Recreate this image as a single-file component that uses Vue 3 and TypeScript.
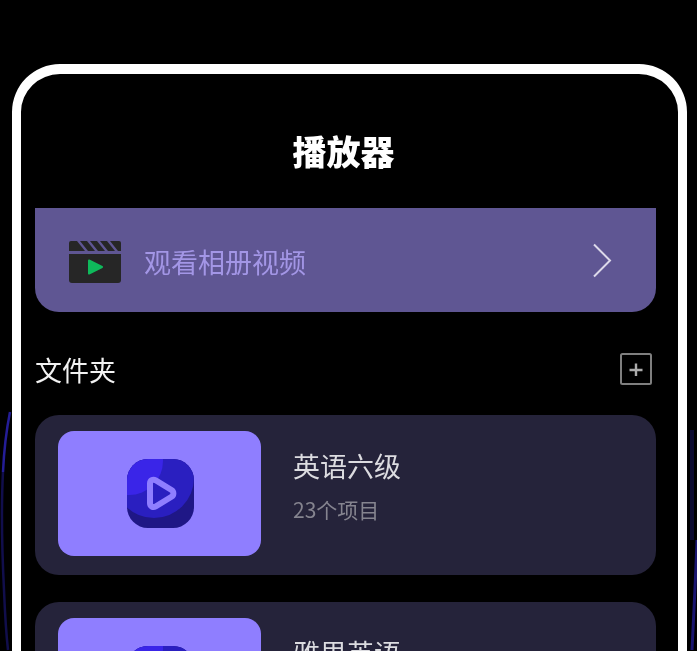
<script setup lang="ts">
interface Folder {
  name: string
  count: string
}

const folders: Folder[] = [
  { name: '英语六级', count: '23个项目' },
  { name: '雅思英语', count: '18个项目' },
]
</script>

<template>
  <div class="page">
    <svg class="bg-lines" width="697" height="651" viewBox="0 0 697 651" fill="none">
      <path d="M10 412C6 432 4 450 3 472" stroke="#241d96" stroke-width="2.5" />
      <path d="M3 472C1 510 2 550 4 590C5 615 6 632 8 650" stroke="#110e4c" stroke-width="2.5" />
      <path d="M692 650C694 610 696 570 697 540" stroke="#1a1670" stroke-width="3" />
      <path d="M692 430V540" stroke="#0c0a30" stroke-width="4" />
    </svg>
    <div class="phone">
      <h1 class="title">播放器</h1>

      <div class="banner">
        <svg class="clapper" width="52" height="42" viewBox="0 0 52 42">
          <path d="M2 0H50A2 2 0 0 1 52 2V10H0V2A2 2 0 0 1 2 0Z" fill="#262626" />
          <path d="M8 0L16 10H19L11 0ZM18 0L26 10H29L21 0ZM28 0L36 10H39L31 0ZM38 0L46 10H49L41 0Z" fill="#5f5693" />
          <path d="M0 13H52V39A3 3 0 0 1 49 42H3A3 3 0 0 1 0 39Z" fill="#262626" />
          <path d="M20 19.5L33 26L20 32.5Z" fill="#0fb95b" stroke="#0fb95b" stroke-width="2" stroke-linejoin="round" />
        </svg>
        <span class="banner-text">观看相册视频</span>
        <svg class="chevron" width="20" height="35" viewBox="0 0 20 35" fill="none">
          <path d="M2 1.5L18 17.5L2 33.5" stroke="#dcd9ea" stroke-width="2" />
        </svg>
      </div>

      <div class="section-head">
        <span class="section-title">文件夹</span>
        <svg width="32" height="32" viewBox="0 0 32 32" fill="none">
          <rect x="1" y="1" width="30" height="30" rx="1.5" stroke="#7f7f7f" stroke-width="2" />
          <path d="M16 10.5V23M9.5 17H22.5" stroke="#ababab" stroke-width="2.4" />
        </svg>
      </div>

      <div class="folder-list">
        <div v-for="folder in folders" :key="folder.name" class="folder">
          <div class="thumb">
            <svg width="67" height="69" viewBox="0 0 67 69">
              <defs>
                <clipPath id="app-icon-clip">
                  <rect width="67" height="69" rx="21" />
                </clipPath>
              </defs>
              <g clip-path="url(#app-icon-clip)">
                <rect width="67" height="69" fill="#1f1786" />
                <circle cx="27" cy="19" r="40" fill="#2a1fc0" />
                <circle cx="2" cy="2" r="34" fill="#3a25e8" />
              </g>
              <path d="M23 24.5C23 21.5 26 19.8 28.6 21.3L44.5 31C47 32.5 47 36.3 44.5 37.8L28.6 47.5C26 49 23 47.3 23 44.3Z" fill="#2a1fc0" stroke="#8f7eff" stroke-width="6" stroke-linejoin="round" />
            </svg>
          </div>
          <div class="folder-info">
            <div class="folder-name">{{ folder.name }}</div>
            <div class="folder-count">{{ folder.count }}</div>
          </div>
        </div>
      </div>
    </div>
  </div>
</template>

<style>
html,
body {
  margin: 0;
  background: #000;
}
</style>

<style scoped>
.page {
  position: relative;
  height: 651px;
  overflow: hidden;
  background: #000;
  font-family: "Noto Sans CJK SC", "Noto Sans", sans-serif;
  filter: blur(0.5px);
}
.bg-lines {
  position: absolute;
  left: 0;
  top: 0;
}
.phone {
  position: relative;
  box-sizing: border-box;
  width: 675px;
  height: 760px;
  margin: 64px 0 0 12px;
  padding: 0 22px 0 14px;
  border: 9px solid #fff;
  border-top-width: 10px;
  border-radius: 48px;
  background: #000;
}
.title {
  height: 134px;
  margin: 0;
  padding-right: 4px;
  font-size: 34px;
  font-weight: 900;
  line-height: 154px;
  text-align: center;
  color: #fff;
}
.banner {
  display: flex;
  align-items: center;
  height: 104px;
  padding: 0 44px 0 34px;
  box-sizing: border-box;
  border-radius: 0 0 24px 24px;
  background: #5f5693;
}
.clapper {
  flex: none;
  margin-top: 4px;
}
.banner-text {
  margin-left: 23px;
  margin-top: 3px;
  font-size: 27px;
  line-height: 40px;
  color: #a396e6;
}
.chevron {
  margin-left: auto;
  margin-top: 1px;
}
.section-head {
  display: flex;
  align-items: center;
  justify-content: space-between;
  height: 32px;
  margin: 41px 0 30px;
  padding-right: 4px;
}
.section-title {
  font-size: 27px;
  line-height: 36px;
  margin-top: 1px;
  color: #f2f2f2;
}
.folder-list {
  display: flex;
  flex-direction: column;
  gap: 27px;
}
.folder {
  display: flex;
  gap: 32px;
  box-sizing: border-box;
  height: 160px;
  padding: 16px 23px;
  border-radius: 24px;
  background: #25233a;
}
.thumb {
  display: flex;
  align-items: center;
  justify-content: center;
  flex: none;
  box-sizing: border-box;
  width: 203px;
  height: 125px;
  padding-left: 2px;
  border-radius: 16px;
  background: #8f7eff;
}
.folder-info {
  padding-top: 15px;
}
.folder-name {
  font-size: 27px;
  line-height: 40px;
  color: #dcdce0;
}
.folder-count {
  margin-top: 8px;
  font-size: 21px;
  line-height: 30px;
  color: #85848f;
}
</style>
